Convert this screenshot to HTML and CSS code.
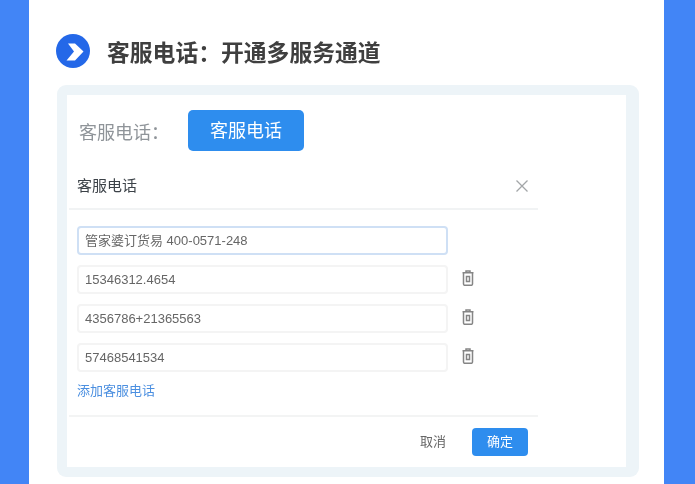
FILE: index.html
```html
<!DOCTYPE html>
<html lang="zh">
<head>
<meta charset="utf-8">
<title>客服电话</title>
<link rel="stylesheet" href="styles.css">
</head>
<body>
<div class="page">
  <main class="sheet">
    <h1 class="heading">
      <svg class="heading-icon" viewBox="0 0 34 34" aria-hidden="true">
        <circle cx="17" cy="17" r="17" fill="#2468e8"/>
        <path d="M12 9.500h7l8.500 8-8.500 9h-8.500l7.500-9z" fill="#fff"/>
      </svg>
      <span class="heading-text">客服电话：开通多服务通道</span>
    </h1>
    <section class="panel">
      <div class="panel-inner">
        <div class="trigger-row">
          <span class="trigger-label">客服电话：</span>
          <button class="trigger-btn" type="button">客服电话</button>
        </div>
        <div class="dialog">
          <header class="dialog-head">
            <span class="dialog-title">客服电话</span>
            <svg class="close" viewBox="0 0 12 12" aria-hidden="true"><path d="M.5.5l11 11M11.500.5l-11 11" stroke="#a3a6a8" stroke-width="1.300" fill="none"/></svg>
          </header>
          <div class="dialog-body">
            <div class="field-row">
              <div class="field field-active">管家婆订货易 400-0571-248</div>
            </div>
            <div class="field-row">
              <div class="field">15346312.4654</div>
              <svg class="trash" viewBox="0 0 12 16" aria-hidden="true"><path d="M4 2.500V1h4v1.500M.5 2.700h11M1.500 2.700v11.300a1.300 1.300 0 0 0 1.300 1.300h6.400a1.300 1.300 0 0 0 1.300-1.300V2.700M4.500 6.500h3v5h-3z" fill="none" stroke="#858585" stroke-width="1.500"/></svg>
            </div>
            <div class="field-row">
              <div class="field">4356786+21365563</div>
              <svg class="trash" viewBox="0 0 12 16" aria-hidden="true"><path d="M4 2.500V1h4v1.500M.5 2.700h11M1.500 2.700v11.300a1.300 1.300 0 0 0 1.300 1.300h6.400a1.300 1.300 0 0 0 1.300-1.300V2.700M4.500 6.500h3v5h-3z" fill="none" stroke="#858585" stroke-width="1.500"/></svg>
            </div>
            <div class="field-row">
              <div class="field">57468541534</div>
              <svg class="trash" viewBox="0 0 12 16" aria-hidden="true"><path d="M4 2.500V1h4v1.500M.5 2.700h11M1.500 2.700v11.300a1.300 1.300 0 0 0 1.300 1.300h6.400a1.300 1.300 0 0 0 1.300-1.300V2.700M4.500 6.500h3v5h-3z" fill="none" stroke="#858585" stroke-width="1.500"/></svg>
            </div>
            <a class="add-link">添加客服电话</a>
          </div>
          <footer class="dialog-foot">
            <span class="cancel">取消</span>
            <button class="confirm" type="button">确定</button>
          </footer>
        </div>
      </div>
    </section>
  </main>
</div>
</body>
</html>
```

FILE: styles.css
```css
* { box-sizing: border-box; }
html, body { margin: 0; padding: 0; }
body {
  font-family: "Liberation Sans", "Noto Sans CJK SC", sans-serif;
  overflow: hidden;
}
.page {
  width: 695px;
  height: 484px;
  overflow: hidden;
  background: #4285f6;
  padding: 0 31px 0 29px;
  filter: blur(0.45px);
}
.sheet {
  height: 484px;
  background: #fff;
  padding: 34px 25px 0 28px;
}
.heading {
  display: flex;
  align-items: center;
  margin: 0 0 17px -1px;
  height: 34px;
  font-size: 22.800px;
  line-height: 34px;
  font-weight: 700;
  color: #3f3f3f;
}
.heading-icon { width: 34px; height: 34px; margin-right: 17px; flex: none; }
.heading-text { padding-top: 3px; }
.panel {
  width: 582px;
  height: 392px;
  background: #edf4f8;
  border-radius: 9px;
  padding: 10px 13px 10px 10px;
}
.panel-inner {
  height: 372px;
  background: #fff;
  padding-top: 15px;
}
.trigger-row { display: flex; align-items: center; height: 41px; padding-left: 12px; }
.trigger-label { width: 109px; font-size: 18px; color: #8f9499; }
.trigger-btn {
  width: 116px;
  height: 41px;
  border: 0;
  padding: 0 0 3px;
  border-radius: 5px;
  background: #2e8dee;
  color: #fff;
  font: inherit;
  font-size: 18px;
}
.dialog { width: 471px; margin-left: 2px; }
.dialog-head {
  display: flex;
  align-items: center;
  justify-content: space-between;
  height: 59px;
  padding: 10px 10px 0 8px;
  border-bottom: 2px solid #f1f3f4;
  margin-right: 2px;
}
.dialog-title { font-size: 15px; color: #3c4248; }
.close { width: 12px; height: 12px; margin: 2px 0 0; }
.dialog-body { height: 205px; padding: 16px 0 0 8px; }
.field-row { display: flex; align-items: center; height: 29px; margin-bottom: 10px; }
.field {
  width: 371px;
  height: 29px;
  border: 2px solid #f4f4f4;
  border-radius: 4px;
  padding-left: 6px;
  font-size: 13px;
  line-height: 25px;
  color: #666;
}
.field-active { border-color: #cfe0f5; }
.trash { width: 12px; height: 16px; margin-left: 14px; margin-top: -3px; }
.add-link {
  display: block;
  margin-top: -1px;
  font-size: 13px;
  line-height: 20px;
  color: #4b8fe0;
}
.dialog-foot {
  display: flex;
  align-items: center;
  justify-content: flex-end;
  margin-right: 2px;
  padding: 11px 10px 0 0;
  border-top: 2px solid #f3f4f4;
}
.cancel { font-size: 13px; color: #666; margin: -4px 26px 0 0; }
.confirm {
  width: 56px;
  height: 28px;
  border: 0;
  padding: 0 0 4px;
  border-radius: 4px;
  background: #2e8dee;
  color: #fff;
  font: inherit;
  font-size: 13px;
}
```
